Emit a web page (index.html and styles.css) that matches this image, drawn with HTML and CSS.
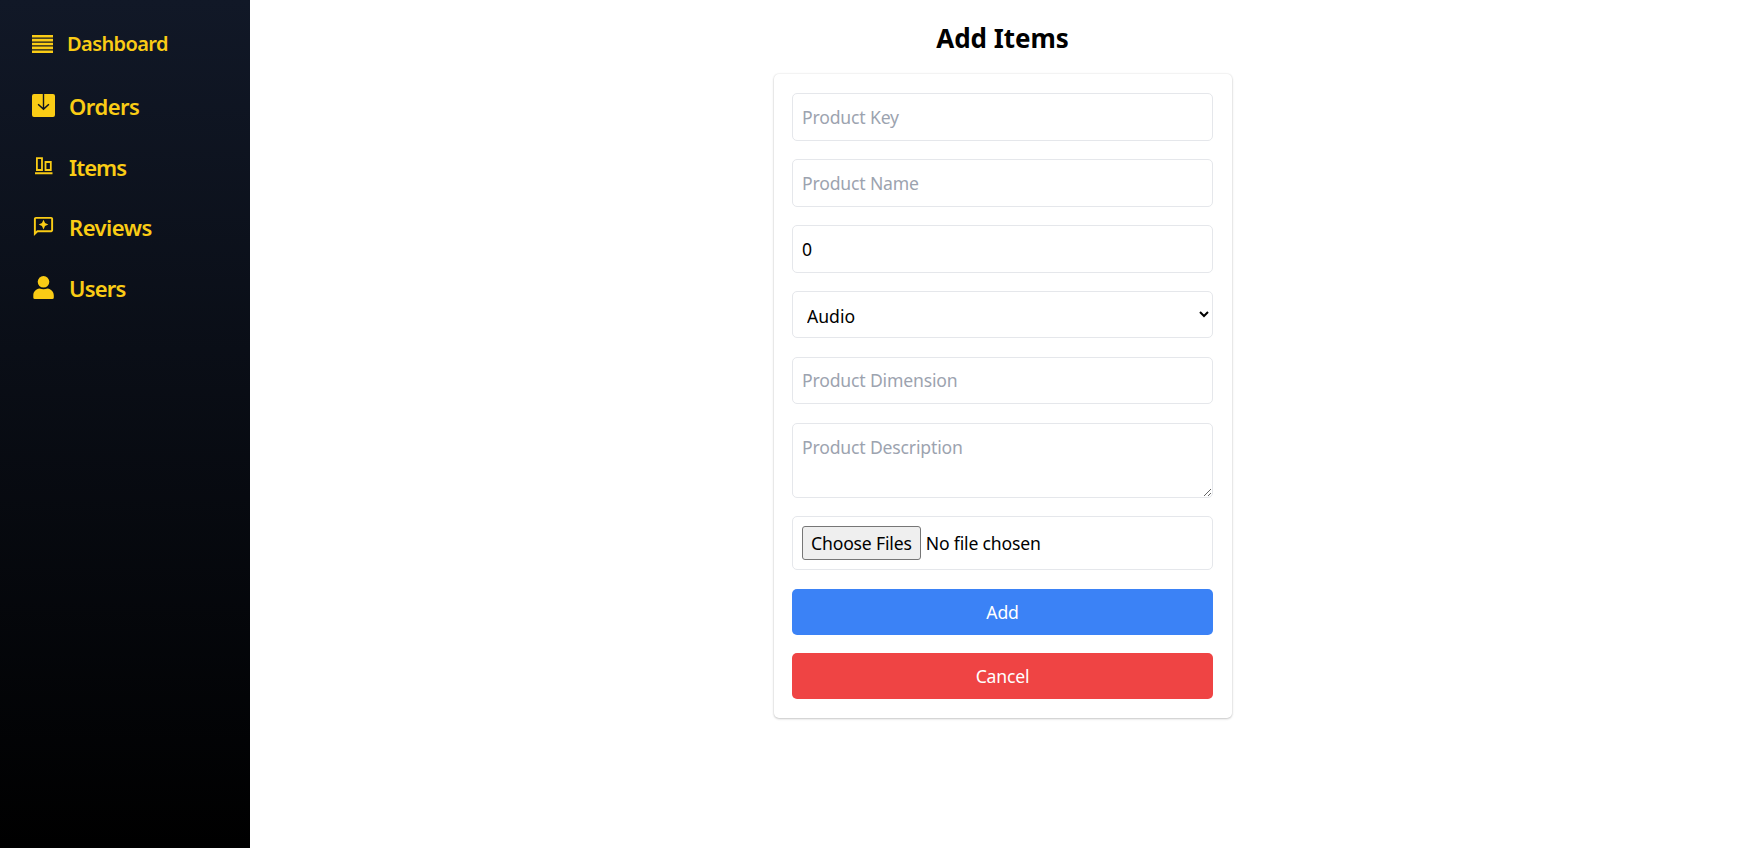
FILE: index.html
```html
<!DOCTYPE html>
<html lang="en">
<head>
<meta charset="utf-8">
<title>Add Items</title>
<link rel="stylesheet" href="styles.css">
</head>
<body>
<div class="layout">
  <nav class="sidebar">
    <a class="brand">
      <svg class="icon-menu" viewBox="0 0 21 18"><path d="M0 0h21v2.6H0zM0 3.85h21v2.6H0zM0 7.7h21v2.6H0zM0 11.55h21v2.6H0zM0 15.4h21v2.6H0z"/></svg>
      <span class="label">Dashboard</span>
    </a>
    <a class="link">
      <svg class="icon" viewBox="0 0 23 23"><path fill-rule="evenodd" d="M2 0H10.8V13.6L6.6 9.7 5.6 10.8 11.5 16.3 17.4 10.8 16.4 9.7 12.2 13.6V0H21A2 2 0 0 1 23 2V21A2 2 0 0 1 21 23H2A2 2 0 0 1 0 21V2A2 2 0 0 1 2 0Z"/></svg>
      <span class="label">Orders</span>
    </a>
    <a class="link">
      <svg class="icon" viewBox="0 0 23 23"><path fill-rule="evenodd" d="M3 17.3H20.5V19.3H3ZM4 2.3H10.9V15.9H4ZM5.8 4.1V14.1H9.1V4.1ZM12.6 6.1H19.7V15.9H12.6ZM14.4 7.9V14.1H17.9V7.9Z"/></svg>
      <span class="label items">Items</span>
    </a>
    <a class="link">
      <svg class="icon" viewBox="0 0 24 24"><path d="M20 2H4c-1.1 0-2 .9-2 2v18l4-4h14c1.1 0 2-.9 2-2V4c0-1.1-.9-2-2-2zm0 14H5.2L4 17.2V4h16v12z"/><path d="M12 15l1.6-3.4L17 10l-3.4-1.6L12 5l-1.6 3.4L7 10l3.4 1.6z"/></svg>
      <span class="label">Reviews</span>
    </a>
    <a class="link">
      <svg class="icon" viewBox="0 0 23 23"><circle cx="11.5" cy="5.8" r="5.8"/><path d="M1.3 21.5V19.5C1.3 15.8 4 13 7.5 12.6 10 13.5 13 13.5 15.5 12.6 19 13 21.8 15.8 21.8 19.5V21.5Q21.8 23 20.3 23H2.8Q1.3 23 1.3 21.5Z"/></svg>
      <span class="label users">Users</span>
    </a>
  </nav>
  <main class="content">
    <h1 class="title">Add Items</h1>
    <form class="card">
      <input class="field" type="text" placeholder="Product Key">
      <input class="field" type="text" placeholder="Product Name">
      <input class="field" type="text" value="0">
      <select class="field select"><option>Audio</option></select>
      <input class="field" type="text" placeholder="Product Dimension">
      <textarea class="field textarea" placeholder="Product Description"></textarea>
      <input class="field file" type="file" multiple>
      <button class="button add" type="button">Add</button>
      <button class="button cancel" type="button">Cancel</button>
    </form>
  </main>
</div>
</body>
</html>
```
FILE: styles.css
```css
* { box-sizing: border-box; }
body {
  margin: 0;
  font-family: "Noto Sans", "Open Sans", sans-serif;
  font-size: 17.6px;
  letter-spacing: -0.17px;
  color: #000;
  background: #fff;
}
.layout { display: flex; height: 848px; overflow: hidden; }
.sidebar {
  width: 250px;
  flex: none;
  padding: 27px 32px;
  background: linear-gradient(to bottom, #111827, #000);
  color: #facc15;
  font-weight: 600;
}
.sidebar svg { fill: currentColor; flex: none; }
.brand, .link { display: flex; align-items: center; }
.brand { height: 33px; gap: 14px; font-size: 20px; letter-spacing: -0.6px; margin-bottom: 29px; }
.link { height: 34px; gap: 14px; font-size: 22px; letter-spacing: -0.5px; margin-bottom: 26.7px; }
.items { letter-spacing: -0.95px; }
.users { letter-spacing: -0.8px; }
.icon-menu { width: 21px; height: 18px; }
.icon { width: 23px; height: 23px; margin-top: -1px; }
.content { flex: 1; display: flex; flex-direction: column; align-items: center; }
.title { margin: 18px 0 0; height: 56px; line-height: 41px; font-size: 26px; font-weight: 700; letter-spacing: -0.05px; }
.card {
  width: 458px;
  height: 644px;
  padding: 19px 18.5px;
  display: flex;
  flex-direction: column;
  gap: 18.5px;
  border-radius: 5px;
  box-shadow: 0 1px 3px rgba(0,0,0,.1), 0 1px 2px rgba(0,0,0,.1), 0 0 2px rgba(0,0,0,.12);
}
.field {
  display: block;
  flex: none;
  width: 100%;
  height: 47.6px;
  margin: 0;
  padding: 9px;
  border: 1px solid #e5e7eb;
  border-radius: 5px;
  background: #fff;
  color: #000;
  font: inherit;
  letter-spacing: inherit;
  line-height: 28px;
}
.field::placeholder { color: #9ca3af; opacity: 1; }
.select { height: 46.8px; padding: 10px 9px 8px 10px; letter-spacing: 0; }
.textarea { height: 75px; resize: vertical; }
.file { height: 54.2px; }
.file::file-selector-button { font: inherit; letter-spacing: inherit; height: 34px; padding: 0 8px; margin: 0 5px 0 0; border: 1px solid #767676; border-radius: 3px; background: #efefef; color: #000; }
.button { flex: none; height: 46px; padding: 0; border: 0; border-radius: 5px; color: #fff; font: inherit; letter-spacing: inherit; }
.add { background: #3b82f6; }
.cancel { background: #ef4444; }
```
